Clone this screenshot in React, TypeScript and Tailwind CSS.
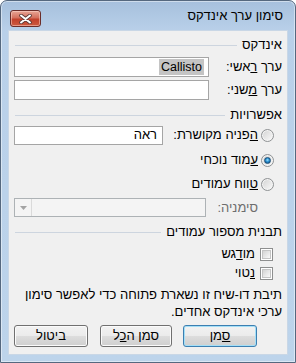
import React from "react";

function SectionHeader({ text }: { text: string }) {
  return (
    <div className="flex items-center h-[14px] gap-[5px]">
      <span className="leading-[14px] whitespace-nowrap">{text}</span>
      <div className="flex-1 h-px bg-[#cdd5df] ml-px" />
    </div>
  );
}

function Radio({ checked }: { checked?: boolean }) {
  return (
    <span className="w-[13px] h-[13px] shrink-0 rounded-full border border-[#8f9294] bg-[linear-gradient(135deg,#d2d2d2,#fbfbfb)] shadow-[inset_0_0_0_1px_#f4f4f4] flex items-center justify-center">
      {checked && (
        <span className="w-[7px] h-[7px] rounded-full border border-[#1c4f78] bg-[radial-gradient(circle_at_50%_40%,#9ae4ff_0%,#2a8fd0_45%,#0c4570_100%)]" />
      )}
    </span>
  );
}

function Checkbox() {
  return (
    <span className="w-[13px] h-[13px] shrink-0 border border-[#8e8f8f] bg-white p-px flex">
      <span className="flex-1 border border-[#c4c4c4] bg-[linear-gradient(135deg,#d4d4d4,#f9f9f9)]" />
    </span>
  );
}

function WinButton({ children, def, w }: { children: React.ReactNode; def?: boolean; w: string }) {
  return (
    <button
      className={
        (def
          ? "border-[#3c7fb1] shadow-[inset_0_0_0_1px_#a4dff7] "
          : "border-[#707070] shadow-[inset_0_0_0_1px_#fbfbfb] ") +
        "h-[22px] rounded-[3px] border bg-[linear-gradient(to_bottom,#f2f2f2_0%,#ebebeb_50%,#dddddd_50%,#cfcfcf_100%)] text-[13px] leading-[20px] text-black " +
        w
      }
    >
      {children}
    </button>
  );
}

export default function App() {
  return (
    <div
      dir="rtl"
      className="w-[296px] h-[363px] flex flex-col border border-[#55687f] rounded-t-[7px] bg-[linear-gradient(to_bottom,#a6c0dd_0px,#b9d0e9_30px,#bdd4eb_100%)] shadow-[inset_0_0_0_1px_rgba(255,255,255,0.45)] font-['Liberation_Sans',Arial,sans-serif] text-[13px] text-black overflow-hidden"
    >
      {/* כותרת */}
      <div className="h-[29px] flex items-center justify-between pr-[12px] pl-[9px] pt-px">
        <span className="text-[13px] leading-[16px] text-black">סימון ערך אינדקס</span>
        <div className="w-[31px] h-[17px] mt-[5px] rounded-[3px] border border-[#6b2d2a] bg-[linear-gradient(to_bottom,#e8a596_0%,#d4705e_45%,#c2412c_55%,#cd5a40_100%)] shadow-[inset_0_0_0_1px_rgba(255,220,210,0.5)] flex items-center justify-center">
          <svg width="13" height="10" viewBox="0 0 13 10">
            <path d="M2 1.5 L11 8.5 M11 1.5 L2 8.5" stroke="#5a3a38" strokeWidth="3.6" strokeLinecap="round" />
            <path d="M2 1.5 L11 8.5 M11 1.5 L2 8.5" stroke="#ffffff" strokeWidth="2" strokeLinecap="round" />
          </svg>
        </div>
      </div>

      {/* תוכן */}
      <div className="flex-1 mx-[7px] mb-[7px] bg-[#f0f0f0] border border-[#c9d7e6] pt-[7px] pl-[5px] pr-[5px] flex flex-col">
        <SectionHeader text="אינדקס" />

        <div className="mt-[5px] flex items-center justify-between h-[20px]">
          <span>
            ערך <u>ר</u>אשי:
          </span>
          <div className="w-[195px] h-[20px] border border-[#a5a5a5] bg-white flex items-center pr-[4px]">
            <span dir="ltr" className="bg-[#c4c4c4] h-[16px] leading-[16px] px-[2px] text-[12.5px]">
              Callisto
            </span>
          </div>
        </div>

        <div className="mt-[3px] flex items-center justify-between h-[20px]">
          <span>
            ערך <u>מ</u>שני:
          </span>
          <div className="w-[195px] h-[20px] border border-[#a5a5a5] bg-white" />
        </div>

        <div className="mt-[8px]">
          <SectionHeader text="אפשרויות" />
        </div>

        <div className="mt-[3px] flex items-center justify-between h-[20px] pr-[8px]">
          <div className="flex items-center gap-[3px]">
            <Radio />
            <span>
              <u>ה</u>פניה מקושרת:
            </span>
          </div>
          <div className="w-[149px] h-[19px] border border-[#a5a5a5] bg-white flex items-center pr-[5px]">
            <span className="leading-[16px]">ראה</span>
          </div>
        </div>

        <div className="mt-[7px] flex items-center h-[16px] pr-[8px] gap-[3px]">
          <Radio checked />
          <span>
            <u>ע</u>מוד נוכחי
          </span>
        </div>

        <div className="mt-[8px] flex items-center h-[16px] pr-[8px] gap-[3px]">
          <Radio />
          <span>
            <u>ט</u>ווח עמודים
          </span>
        </div>

        <div className="mt-[6px] flex items-center justify-between h-[19px] pr-[24px]">
          <span className="text-[#6d6d6d]">סימניה:</span>
          <div dir="ltr" className="w-[192px] h-[19px] border border-[#adb2b5] bg-[#f4f4f4] flex">
            <div className="w-[17px] h-full border-r border-[#dadada] flex items-center justify-center">
              <svg width="7" height="4" viewBox="0 0 7 4">
                <path d="M0 0 H7 L3.5 4 Z" fill="#a3a3a3" />
              </svg>
            </div>
          </div>
        </div>

        <div className="mt-[8px]">
          <SectionHeader text="תבנית מספור עמודים" />
        </div>

        <div className="mt-[7px] flex items-center h-[16px] pr-[9px] gap-[5px]">
          <Checkbox />
          <span>
            מו<u>ד</u>גש
          </span>
        </div>

        <div className="mt-[3px] flex items-center h-[16px] pr-[9px] gap-[5px]">
          <Checkbox />
          <span>
            <u>נ</u>טוי
          </span>
        </div>

        <p className="mt-[5px] leading-[17px] pl-[2px]">
          תיבת דו-שיח זו נשארת פתוחה כדי לאפשר סימון ערכי אינדקס אחדים.
        </p>

        <div className="mt-[5px] flex items-center mr-[25px] gap-[11px]">
          <WinButton def w="w-[74px]">
            <u>ס</u>מן
          </WinButton>
          <WinButton w="w-[72px]">
            סמן ה<u>כ</u>ל
          </WinButton>
          <WinButton w="w-[74px] mr-px">ביטול</WinButton>
        </div>
      </div>
    </div>
  );
}
